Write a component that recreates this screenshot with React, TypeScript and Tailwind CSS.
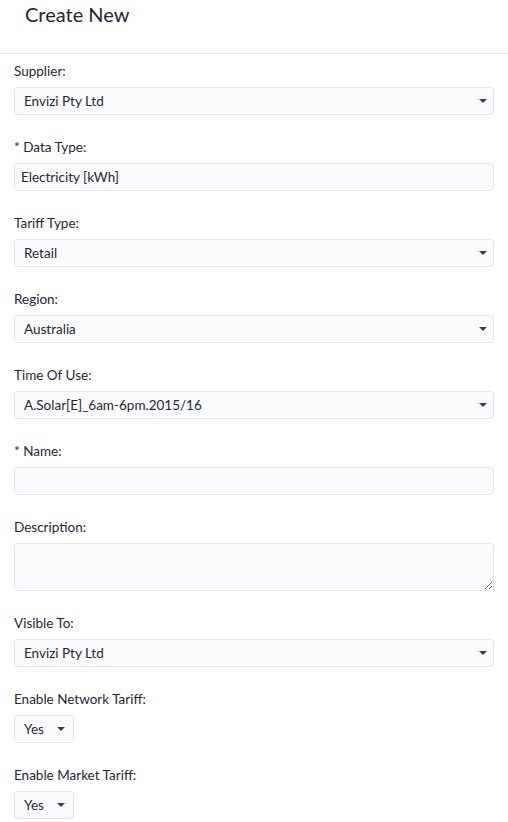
import React from "react";

function Caret() {
  return (
    <svg width="8" height="4" viewBox="0 0 8 4" className="shrink-0">
      <path d="M0 0h8L4 4z" fill="#3b3b4a" />
    </svg>
  );
}

function Label({ text }: { text: string }) {
  return <div className="text-[13.5px] leading-[18px] text-[#262633] mb-[7px]">{text}</div>;
}

const box = "rounded-[4px] border border-[#e2e4ec] bg-[#fafbfd] text-[13.5px] text-[#262633]";

function Select({ label, value }: { label: string; value: string }) {
  return (
    <div className="mb-[23px]">
      <Label text={label} />
      <div className={`${box} h-[28px] flex items-center justify-between pl-[9px] pr-[6px]`}>
        <span>{value}</span>
        <Caret />
      </div>
    </div>
  );
}

function Input({ label, value = "" }: { label: string; value?: string }) {
  return (
    <div className="mb-[23px]">
      <Label text={label} />
      <div className={`${box} h-[28px] flex items-center px-[6px]`}>{value}</div>
    </div>
  );
}

function SmallSelect({ label }: { label: string }) {
  return (
    <div className="mb-[23px]">
      <Label text={label} />
      <div className={`${box} h-[28px] w-[60px] flex items-center justify-between pl-[9px] pr-[8px]`}>
        <span>Yes</span>
        <Caret />
      </div>
    </div>
  );
}

export default function App() {
  return (
    <div className="w-[508px] h-[822px] bg-white overflow-hidden" style={{ fontFamily: "Lato, 'Noto Sans', sans-serif" }}>
      <div className="h-[54px] border-b border-[#e4e6ee] pl-[25px] pt-[1px]">
        <h1 className="text-[20px] leading-[26px] text-[#262633]">Create New</h1>
      </div>

      <div className="px-[14px] pt-[8px]">
        <Select label="Supplier:" value="Envizi Pty Ltd" />
        <Input label="* Data Type:" value="Electricity [kWh]" />
        <Select label="Tariff Type:" value="Retail" />
        <Select label="Region:" value="Australia" />
        <Select label="Time Of Use:" value="A.Solar[E]_6am-6pm.2015/16" />
        <Input label="* Name:" />

        <div className="mb-[23px]">
          <Label text="Description:" />
          <textarea className={`${box} block w-full h-[48px] outline-none`} />
        </div>

        <Select label="Visible To:" value="Envizi Pty Ltd" />
        <SmallSelect label="Enable Network Tariff:" />
        <SmallSelect label="Enable Market Tariff:" />
      </div>
    </div>
  );
}
